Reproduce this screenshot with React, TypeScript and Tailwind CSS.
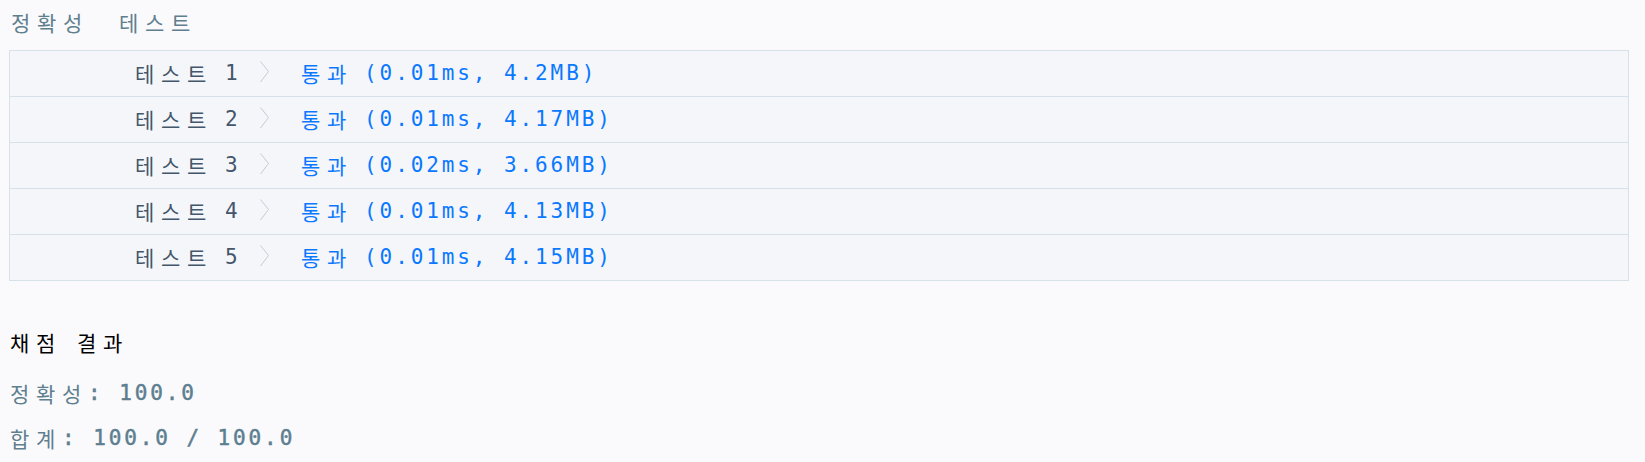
import React from 'react';

const rows = [
  { n: 1, time: '0.01ms', mem: '4.2MB' },
  { n: 2, time: '0.01ms', mem: '4.17MB' },
  { n: 3, time: '0.02ms', mem: '3.66MB' },
  { n: 4, time: '0.01ms', mem: '4.13MB' },
  { n: 5, time: '0.01ms', mem: '4.15MB' },
];

// latin glyphs in a mono face, hangul in CJK with wider tracking
const mono = "font-['DejaVu_Sans_Mono','Noto_Sans_CJK_KR',monospace] text-[21px] tracking-[2.9px]";
const ko = "font-['Noto_Sans_CJK_KR',sans-serif] text-[21px] tracking-[6.7px]";

function Chevron() {
  return (
    <svg width="10" height="22" viewBox="0 0 10 22" className="block mb-[3px]">
      <path d="M0.5 0.5 L8.5 10.5 L0.5 21" fill="none" stroke="#c6cad2" strokeWidth="1" />
    </svg>
  );
}

export default function App() {
  return (
    <div className="min-h-screen bg-[#fafafd] pl-[9px] pr-[16px]">
      {/* 정확성 테스트 */}
      <div className="h-[50px] flex items-center pl-[2px] pb-[4px] text-[#607f8e]">
        <span className={ko}>정확성</span>
        <span className={`${ko} ml-[30px]`}>테스트</span>
      </div>

      <div className="border border-[#d6e1ea] bg-[#f5f6fa]">
        {rows.map((r, i) => (
          <div
            key={r.n}
            className={`flex items-center ${
              i < rows.length - 1 ? 'h-[46px] border-b border-[#d6e1ea]' : 'h-[45px]'
            }`}
          >
            <div className="w-[250px] pl-[125px] flex items-center text-[#44566b]">
              <span className={ko}>테스트</span>
              <span className={`${mono} ml-[12px]`}>{r.n}</span>
            </div>
            <Chevron />
            <div className="ml-[31px] flex items-center text-[#0a78ff]">
              <span className={ko}>통과</span>
              <span className={`${mono} ml-[11px]`}>
                ({r.time}, {r.mem})
              </span>
            </div>
          </div>
        ))}
      </div>

      {/* 채점 결과 */}
      <div className="pl-[1px]">
        <div className="mt-[42px] h-[40px] flex items-center text-black">
          <span className={ko}>채점</span>
          <span className={`${ko} ml-[15px]`}>결과</span>
        </div>
        <div className="mt-[11px] h-[40px] flex items-center text-[#607f8e]">
          <span className={ko}>정확성</span>
          <span className={`${mono} text-[#5d7f90] [-webkit-text-stroke:0.5px_#5d7f90]`}>: 100.0</span>
        </div>
        <div className="mt-[5px] h-[40px] flex items-center text-[#607f8e]">
          <span className={ko}>합계</span>
          <span className={`${mono} text-[#5d7f90] [-webkit-text-stroke:0.5px_#5d7f90]`}>: 100.0 / 100.0</span>
        </div>
      </div>
    </div>
  );
}
